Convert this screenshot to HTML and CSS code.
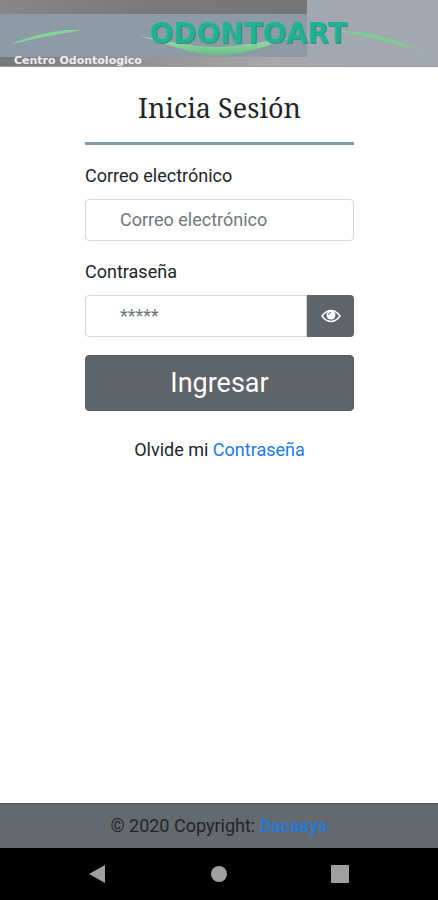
FILE: index.html
```html
<!DOCTYPE html>
<html lang="es">
<head>
<meta charset="utf-8">
<meta name="viewport" content="width=device-width, initial-scale=1">
<title>Inicia Sesión</title>
<link rel="stylesheet" href="styles.css">
</head>
<body>
<header class="banner">
<svg class="banner-art" viewBox="0 0 438 67" role="img" aria-label="Odontoart Centro Odontologico">
<defs>
<linearGradient id="top"><stop offset="0" stop-color="#898687"/><stop offset=".5" stop-color="#7b7879"/><stop offset="1" stop-color="#777677"/></linearGradient>
<linearGradient id="strip"><stop offset="0" stop-color="#777778"/><stop offset=".4" stop-color="#939194"/><stop offset=".8" stop-color="#aaa6a9"/><stop offset="1" stop-color="#a3a6ae"/></linearGradient>
<linearGradient id="wave" x2="0" y2="1"><stop offset="0" stop-color="#a9e4b4"/><stop offset="1" stop-color="#65bf82"/></linearGradient>
</defs>
<rect width="438" height="67" fill="#a3a7af"/>
<rect width="307" height="14" fill="url(#top)"/>
<rect y="14" width="307" height="43" fill="#8d9ca4"/>
<rect y="57" width="340" height="10" fill="url(#strip)"/>
<rect y="66" width="438" height="1" fill="#999a9e"/>
<path d="M8 45Q38 33 65 30L82 30L66 33Q46 36 8 45Z" fill="#86d39a"/>
<path d="M140 36C174 42 190 47 220 47C244 46 266 41 290 38C266 46 246 55 218 55C190 55 166 43 140 36Z" fill="url(#wave)"/>
<path d="M338 31C370 31 390 38 424 51C394 44 368 36 338 31Z" fill="#79cf93"/>
<text class="brand-shadow" x="249" y="44" text-anchor="middle">ODONTOART</text>
<text class="brand" x="248" y="43" text-anchor="middle">ODONTOART</text>
<text class="tagline" x="14" y="64">Centro Odontologico</text>
</svg>
</header>
<main class="content">
<h1 class="title">Inicia Sesión</h1>
<form class="login">
<label class="label" for="email">Correo electrónico</label>
<input class="field" id="email" type="email" placeholder="Correo electrónico">
<label class="label" for="password">Contraseña</label>
<div class="group">
<input class="field" id="password" type="password" placeholder="*****">
<button class="reveal" type="button" aria-label="Mostrar contraseña">
<svg class="eye" viewBox="0 0 20 14" aria-hidden="true"><path d="M1 7Q5 1.500 10 1.500T19 7Q15 12.500 10 12.500T1 7Z" fill="none" stroke="#fff" stroke-width="1.500"/><circle cx="10" cy="6" r="4.500" fill="#fff"/><path d="M7.500 6Q7.500 3.500 10 3.500" fill="none" stroke="#5f6468"/></svg>
</button>
</div>
<button class="submit" type="submit">Ingresar</button>
</form>
<p class="forgot">Olvide mi <a href="#">Contraseña</a></p>
</main>
<footer class="footer">© 2020 Copyright: <a class="owner" href="#">Dacasys</a></footer>
<nav class="system" aria-label="Sistema">
<button class="key" type="button" aria-label="Atrás"><svg viewBox="0 0 18 18"><path d="M0 9L16 0V18Z"/></svg></button>
<button class="key" type="button" aria-label="Inicio"><svg viewBox="0 0 18 18"><circle cx="9" cy="9" r="8"/></svg></button>
<button class="key" type="button" aria-label="Recientes"><svg viewBox="0 0 18 18"><rect width="18" height="18" rx="1"/></svg></button>
</nav>
</body>
</html>
```
FILE: styles.css
```css
* { box-sizing: border-box; }
body {
  margin: 0;
  min-height: 100vh;
  display: flex;
  flex-direction: column;
  background: #fff;
  color: #212529;
  font: 18px/26px Roboto, sans-serif;
}
a { color: #1a7bf0; text-decoration: none; }
button, input { font: inherit; }
.banner-art { display: block; width: 100%; }
.brand, .brand-shadow { font: bold 28px "DejaVu Sans", sans-serif; }
.brand { fill: #1fb491; }
.brand-shadow { fill: #4c8580; }
.tagline { font: bold 11px "DejaVu Sans", sans-serif; fill: #eee; }
.content {
  flex: 1;
  padding: 21px 84px 20px 85px;
}
.title {
  margin: 0 0 19px;
  padding-bottom: 14px;
  border-bottom: 3px solid #7d9dab;
  font: 27px/40px "Noto Serif", "DejaVu Serif Condensed", "DejaVu Serif", serif;
  text-align: center;
}
.login { display: flex; flex-direction: column; }
.label { margin-bottom: 11px; line-height: 24px; }
.field {
  width: 100%;
  min-width: 0;
  height: 42px;
  margin-bottom: 19px;
  padding: 0 34px 2px;
  border: 1px solid #d5d8db;
  border-radius: 4px;
  background: #fff;
  color: #495057;
}
.field::placeholder { color: #70777d; opacity: 1; }
.group { display: flex; margin-bottom: 18px; }
.group .field {
  margin: 0;
  border-radius: 4px 0 0 4px;
}
.reveal {
  flex: 0 0 47px;
  padding: 0;
  border: 0;
  border-radius: 0 4px 4px 0;
  background: #5f6468;
}
.eye { display: block; width: 20px; margin: 0 auto; }
.submit {
  height: 56px;
  padding: 0;
  border: 1px solid #565b5e;
  border-radius: 4px;
  background: #5f6468;
  color: #fff;
  font-size: 27px;
}
.forgot { margin: 26px 0 0; text-align: center; }
.footer {
  padding: 9px 0;
  border-top: 1px solid #50565a;
  background: #63696c;
  text-align: center;
}
.owner { font-weight: bold; color: #2878d8; }
.system {
  display: flex;
  justify-content: center;
  gap: 103px;
  padding: 17px 0;
  background: #000;
}
.key {
  width: 18px;
  height: 18px;
  padding: 0;
  border: 0;
  background: none;
}
.key svg { display: block; fill: #a0a0a0; }
```
